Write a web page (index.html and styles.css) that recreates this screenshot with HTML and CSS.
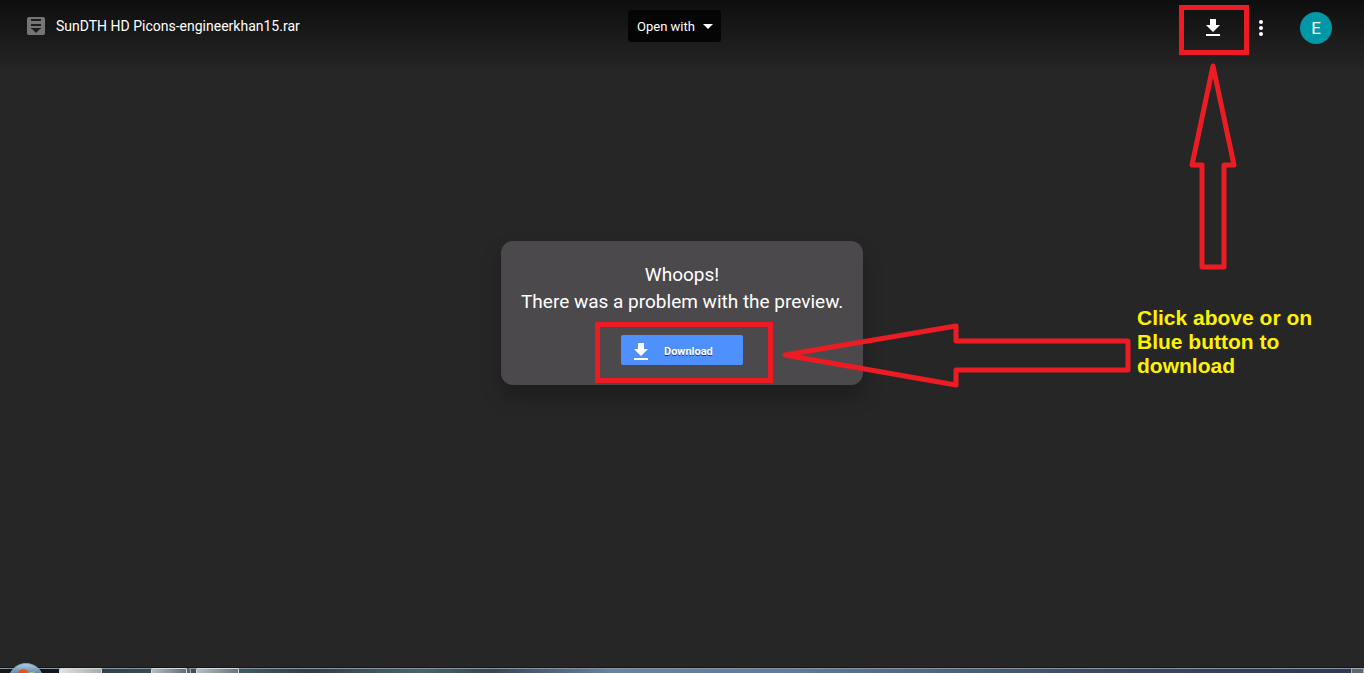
FILE: index.html
```html
<!DOCTYPE html>
<html lang="en">
<head>
  <meta charset="UTF-8" />
  <meta name="viewport" content="width=device-width, initial-scale=1.0"/>
  <title>SunDTH HD Picons-engineerkhan15.rar</title>
  <link rel="stylesheet" href="styles.css">
</head>
<body>
  <header class="toolbar">
    <div class="file">
      <svg class="file-icon" width="18" height="18" viewBox="0 0 18 18" aria-hidden="true">
        <rect width="18" height="18" rx="2" fill="#757575"/>
        <path d="M4 2h10v2H4zM4 7h10v2H4zM4 11h10v1h-1l-4 4-4-4H4z" fill="#1c1c1c"/>
      </svg>
      <span class="file-name">SunDTH HD Picons-engineerkhan15.rar</span>
    </div>

    <button class="open-with">
      Open with
      <svg width="10" height="5" viewBox="0 0 10 5" aria-hidden="true"><path d="M0 0h10L5 5z" fill="#fff"/></svg>
    </button>

    <div class="actions">
      <div class="marked marked-top">
        <button class="icon-btn" aria-label="Download">
          <svg width="24" height="24" viewBox="0 0 24 24"><path d="M19 9h-4V3H9v6H5l7 7 7-7zM5 18v2h14v-2H5z" fill="#fff"/></svg>
        </button>
        <svg class="arrow-up" width="48" height="212" viewBox="0 0 48 212" aria-hidden="true">
          <path d="M24 8L3 107h10v102h22V107h10z"/>
        </svg>
      </div>
      <button class="icon-btn" aria-label="More actions">
        <svg width="24" height="24" viewBox="0 0 24 24" fill="#fff"><circle cx="12" cy="6" r="2"/><circle cx="12" cy="12" r="2"/><circle cx="12" cy="18" r="2"/></svg>
      </button>
      <button class="avatar">E</button>
    </div>
  </header>

  <main class="viewer">
    <div class="card">
      <p>Whoops!</p>
      <p>There was a problem with the preview.</p>
      <div class="marked marked-card">
        <button class="download">
          <svg width="24" height="24" viewBox="0 0 24 24" aria-hidden="true"><path d="M19 9h-4V3H9v6H5l7 7 7-7zM5 18v2h14v-2H5z" fill="#fff"/></svg>
          <span>Download</span>
        </button>
      </div>
      <svg class="arrow-left" width="350" height="66" viewBox="0 0 350 66" aria-hidden="true">
        <path d="M4 33L175 4v15h172v29H175v15z"/>
      </svg>
      <div class="note">Click above or on Blue button to download</div>
    </div>
  </main>

  <footer class="taskbar">
    <button class="start" aria-label="Start">
      <svg width="36" height="11" viewBox="0 0 36 11">
        <defs>
          <linearGradient id="orb" x1="0" y1="0" x2="0" y2="1">
            <stop offset="0" stop-color="#b4cfe0"/>
            <stop offset="0.400" stop-color="#456f94"/>
          </linearGradient>
        </defs>
        <ellipse cx="18" cy="18" rx="17" ry="16.500" fill="url(#orb)" stroke="#7fa4bf"/>
        <path d="M10 11c1-4 6-5 10-2l-1 2z" fill="#e2531d"/>
        <path d="M21 10c2 0 4 0 6-1l-1 2h-5z" fill="#a4bf6a"/>
      </svg>
    </button>
    <button class="task task-first" aria-label="Window 1"></button>
    <button class="task task-second" aria-label="Window 2"></button>
    <button class="task task-third" aria-label="Window 3"></button>
    <button class="show-desktop" aria-label="Show desktop"></button>
  </footer>
</body>
</html>
```
FILE: styles.css
```css
* {
  box-sizing: border-box;
}

body {
  margin: 0;
  min-height: 100vh;
  display: flex;
  flex-direction: column;
  overflow: hidden;
  font-family: Roboto, sans-serif;
  color: white;
  background: #262626 linear-gradient(to bottom, #0e0e0e, #262626) no-repeat top / 100% 72px;
}

button {
  margin: 0;
  padding: 0;
  border: none;
  background: none;
  color: white;
  font-family: inherit;
  cursor: pointer;
}

svg {
  display: block;
  flex: none;
}

p {
  margin: 0;
}

/* top bar */
.toolbar {
  display: grid;
  grid-template-columns: minmax(0, 1fr) auto minmax(0, 1fr);
  align-items: start;
  padding: 10px 32px 10px 27px;
}

.file {
  display: flex;
  align-items: center;
  gap: 11px;
  height: 32px;
  font-size: 14px;
}

.open-with {
  display: flex;
  align-items: center;
  justify-content: space-between;
  width: 93px;
  height: 32px;
  margin-right: 10px;
  padding: 0 8px 0 9px;
  border-radius: 3px;
  background: #050505;
  font-size: 13px;
}

.actions {
  display: flex;
  align-items: center;
  justify-content: flex-end;
  gap: 24px;
  padding-top: 2px;
}

.icon-btn {
  display: block;
  width: 24px;
  height: 24px;
}

.avatar {
  width: 32px;
  height: 32px;
  margin-left: 3px;
  border-radius: 50%;
  background: #0097a7;
  font-size: 17px;
}

/* error card */
.viewer {
  flex: 1;
  display: flex;
  align-items: center;
  justify-content: center;
  padding-bottom: 95px;
}

.card {
  position: relative;
  width: 362px;
  padding: 20px;
  border-radius: 12px;
  background: #4c494c;
  box-shadow: 0 12px 20px rgba(0, 0, 0, 0.25);
  text-align: center;
  font-size: 19px;
  line-height: 27px;
  white-space: nowrap;
}

.download {
  display: flex;
  align-items: flex-end;
  gap: 11px;
  width: 122px;
  height: 30px;
  padding: 0 8px 1px;
  border-radius: 2px;
  background: #4d90fe;
  font-size: 11px;
  font-weight: bold;
  line-height: 24px;
  text-shadow: 0 1px rgba(0, 0, 0, 0.6);
}

/* red marks drawn over the page */
.marked {
  position: relative;
}

.marked::after {
  content: "";
  position: absolute;
  border: 5px solid #ed1c24;
  pointer-events: none;
}

.marked-top::after {
  inset: -11px -24px -15px -22px;
}

.marked-card {
  width: 122px;
  margin: 20px auto 0;
}

.marked-card::after {
  inset: -13px -30px -18px -26px;
}

.arrow-up,
.arrow-left {
  position: absolute;
  fill: none;
  stroke: #ed1c24;
  stroke-width: 5px;
  stroke-linejoin: round;
  pointer-events: none;
}

.arrow-up {
  top: 42px;
  left: -12px;
}

.arrow-left {
  top: 81px;
  left: 280px;
}

.note {
  position: absolute;
  top: 65px;
  left: 636px;
  width: 190px;
  color: #fff200;
  font-family: "Liberation Sans", Arial, sans-serif;
  font-size: 21px;
  font-weight: bold;
  line-height: 24px;
  text-align: left;
  white-space: normal;
}

/* taskbar */
.taskbar {
  position: relative;
  display: flex;
  height: 6px;
  padding-left: 59px;
  border-top: 1px solid #11151c;
  background: linear-gradient(to right, #11171b 58px, #30434c 102px, #405a64 240px, #2f3e49 310px, #49656b 420px, #344653 490px, #536782 560px, #6583a6 610px, #5d7ba0 58%, #4a627c 70%, #3b4b5e 80%, #2b3850);
  box-shadow: inset 0 1px #8b96a2;
}

.start {
  position: absolute;
  left: 8px;
  bottom: 0;
}

.task {
  width: 43px;
  border: 1px solid #d5dadd;
  border-bottom: none;
  border-radius: 2px 2px 0 0;
  background: linear-gradient(to right, #e1e2e2, #a9acad);
}

.task-second {
  width: 36px;
  margin-left: 49px;
  background: linear-gradient(to right, #b5bdc1, #626d74);
  box-shadow: 3px 0 #56636b, 4px 0 #a0abb1;
}

.task-third {
  margin-left: 9px;
  background: linear-gradient(to right, #b6bec0, #68767b);
}

.show-desktop {
  width: 13px;
  margin-left: auto;
  border: 1px solid #a5acb5;
  border-bottom: none;
  background: #62666f;
}
```
